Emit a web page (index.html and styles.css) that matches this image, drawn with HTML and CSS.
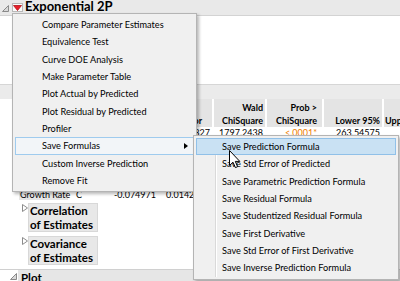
FILE: index.html
```html
<!DOCTYPE html>
<html>
<head>
<meta charset="utf-8">
<link rel="stylesheet" href="styles.css">
</head>
<body>
<div class="page">
  <div class="report">
    <div class="ohead">
      <svg class="disc" width="7" height="7" viewBox="0 0 7 7"><polygon points="6.5,0.5 6.5,6.5 0.5,6.5" fill="#d9d9d9" stroke="#8a8a8a" stroke-width="1"/></svg>
      <span class="redbtn"><svg width="9" height="6" viewBox="0 0 9 6"><polygon points="0.5,0.5 8.5,0.5 4.5,5.5" fill="#e8202a" stroke="#b01018" stroke-width="0.8"/></svg></span>
      <span class="otitle">Exponential 2P</span>
    </div>
    <div class="fitarea"></div>
    <div class="pehead"></div>
    <div class="petable">
      <div class="hc"></div>
      <div class="hc"></div>
      <div class="hc r"></div>
      <div class="hc r se">Std Error</div>
      <div class="hc r">Wald<br>ChiSquare</div>
      <div class="hc r pr">Prob &gt;<br>ChiSquare</div>
      <div class="hc r">Lower 95%</div>
      <div class="hc l">Upper 95%</div>

      <div class="dc">Scale</div>
      <div class="dc"></div>
      <div class="dc r">351.69134</div>
      <div class="dc r">8.2955827</div>
      <div class="dc r">1797.2438</div>
      <div class="dc r pr orange">&lt;.0001*</div>
      <div class="dc r">263.54575</div>
      <div class="dc r"></div>

      <div class="gap"></div>

      <div class="dc term">Growth Rate</div>
      <div class="dc flag">C</div>
      <div class="dc r">-0.074971</div>
      <div class="dc r">0.0142116</div>
      <div class="dc r"></div>
      <div class="dc r"></div>
      <div class="dc r"></div>
      <div class="dc r"></div>
    </div>
    <div class="subout first">
      <svg class="rtri" width="6" height="8" viewBox="0 0 6 8"><polygon points="0.5,0.5 5.5,4 0.5,7.5" fill="#ffffff" stroke="#8c8c8c" stroke-width="1"/></svg>
      <div class="subbox">Correlation<br>of Estimates</div>
    </div>
    <div class="subout">
      <svg class="rtri" width="6" height="8" viewBox="0 0 6 8"><polygon points="0.5,0.5 5.5,4 0.5,7.5" fill="#ffffff" stroke="#8c8c8c" stroke-width="1"/></svg>
      <div class="subbox">Covariance<br>of Estimates</div>
    </div>
    <div class="plothead">
      <svg class="disc" width="7" height="7" viewBox="0 0 7 7"><polygon points="6.5,0.5 6.5,6.5 0.5,6.5" fill="#d9d9d9" stroke="#8a8a8a" stroke-width="1"/></svg>
      <span class="plotband">Plot</span>
    </div>
  </div>

  <div class="menu main">
    <div class="mi">Compare Parameter Estimates</div>
    <div class="mi">Equivalence Test</div>
    <div class="mi">Curve DOE Analysis</div>
    <div class="mi">Make Parameter Table</div>
    <div class="mi">Plot Actual by Predicted</div>
    <div class="mi">Plot Residual by Predicted</div>
    <div class="mi">Profiler</div>
    <div class="mi open"><span>Save Formulas</span><span class="arrow"></span></div>
    <div class="mi">Custom Inverse Prediction</div>
    <div class="mi">Remove Fit</div>
  </div>

  <div class="menu sub">
    <div class="mi hot">Save Prediction Formula</div>
    <div class="mi">Save Std Error of Predicted</div>
    <div class="mi">Save Parametric Prediction Formula</div>
    <div class="mi">Save Residual Formula</div>
    <div class="mi">Save Studentized Residual Formula</div>
    <div class="mi">Save First Derivative</div>
    <div class="mi">Save Std Error of First Derivative</div>
    <div class="mi">Save Inverse Prediction Formula</div>
  </div>

  <svg class="cursor" width="12" height="19" viewBox="0 0 12 19"><path d="M0.5,0.5 L0.5,15.5 L4,12.2 L6.4,17.6 L8.6,16.7 L6.3,11.4 L10.8,11.4 Z" fill="#ffffff" stroke="#000000" stroke-width="1" stroke-linejoin="miter"/></svg>
</div>
</body>
</html>
```

FILE: styles.css
```css
html, body {
  margin: 0;
  padding: 0;
  background: #ffffff;
}
.page {
  position: relative;
  width: 400px;
  height: 281px;
  overflow: hidden;
  font-family: Lato, "Open Sans", sans-serif;
  color: #000;
  background: #ffffff;
}
.report {
  display: flex;
  flex-direction: column;
}
.ohead {
  height: 16px;
  box-sizing: border-box;
  background: #e9e9e9;
  border-bottom: 1px solid #d3d3d3;
  display: flex;
  align-items: flex-start;
  padding-left: 2px;
}
.ohead .disc {
  margin-top: 5px;
}
.redbtn {
  width: 11px;
  height: 9px;
  box-sizing: border-box;
  margin-left: 3px;
  margin-top: 3px;
  border: 1px solid #b8b8b8;
  background: #fbfbfb;
  display: flex;
  align-items: center;
  justify-content: center;
}
.otitle {
  margin-left: 2px;
  font-weight: 700;
  font-size: 13px;
  line-height: 15px;
  margin-top: -1px;
}
.fitarea {
  height: 68px;
  background: #ffffff;
}
.pehead {
  height: 15px;
  box-sizing: border-box;
  background: #ebebeb;
  border-top: 1px solid #d6d6d6;
}
.petable {
  display: grid;
  grid-template-columns: 49px 28px 58px 52px 51px 55px 58px 56px;
  column-gap: 2px;
  margin-left: 19px;
  font-size: 9px;
}
.hc {
  background: #e4e4e4;
  height: 28px;
  font-weight: 700;
  font-size: 9px;
  line-height: 12.5px;
  display: flex;
  flex-direction: column;
  justify-content: flex-end;
  padding: 0 2px 0 2px;
  box-sizing: border-box;
  white-space: nowrap;
}
.hc.r { text-align: right; }
.hc.l { text-align: left; padding-left: 1px; }
.hc.se { padding-right: 10px; }
.dc {
  height: 11px;
  line-height: 11px;
  white-space: nowrap;
  padding: 0 2px;
  overflow: hidden;
}
.dc.r { text-align: right; }
.dc.flag { padding-left: 6px; }
.pr { padding-right: 5px; }
.dc.pr { padding-right: 5px; }
.orange { color: #f07d00; }
.dc.term {
  background: #e6e6e6;
  padding-left: 1px;
  overflow: visible;
}
.gap {
  grid-column: 1 / -1;
  height: 51px;
}
.subout {
  display: flex;
  align-items: flex-start;
  margin-left: 22px;
  margin-top: 4px;
}
.subout.first {
  margin-top: 3px;
}
.rtri {
  margin-top: 1px;
}
.subbox {
  width: 70px;
  box-sizing: border-box;
  background: #e8e8e8;
  border: 1px solid #d8d8d8;
  font-weight: 700;
  font-size: 11.5px;
  line-height: 13.5px;
  padding: 0 0 0 1px;
}
.plothead {
  display: flex;
  align-items: flex-start;
  margin-top: 4px;
  padding-left: 10px;
  border-top: 1px solid #d0d0d0;
  padding-top: 0;
}
.plothead .disc {
  margin-top: 3px;
}
.plotband {
  flex: 1;
  margin-left: 1px;
  background: #e6e6e6;
  font-weight: 700;
  font-size: 11.5px;
  line-height: 16px;
  padding-left: 3px;
  height: 16px;
}

/* menus */
.menu {
  position: absolute;
  box-sizing: border-box;
  background: #f0f0f0;
  border: 1px solid #b4b4b4;
  padding: 2px;
  box-shadow: 2px 2px 3px rgba(0, 0, 0, 0.28);
  font-size: 9.2px;
}
.menu.main {
  left: 12px;
  top: 13px;
  width: 185px;
}
.menu.sub {
  left: 193px;
  top: 135px;
  width: 206px;
}
.menu.sub::before {
  content: "";
  position: absolute;
  left: 21px;
  top: 2px;
  bottom: 2px;
  width: 1px;
  background: #d9d9d9;
  border-right: 1px solid #ffffff;
}
.mi {
  position: relative;
  height: 17.33px;
  box-sizing: border-box;
  border: 1px solid transparent;
  display: flex;
  align-items: center;
  justify-content: space-between;
  white-space: nowrap;
  color: #000;
}
.main .mi {
  padding-left: 26px;
  padding-right: 5px;
}
.sub .mi {
  padding-left: 25px;
}
.mi.open {
  border-color: #9fcbee;
  background: #f2f5f8;
}
.mi.hot {
  border-color: #90c0e8;
  background: #c9e1f3;
}
.arrow {
  width: 0;
  height: 0;
  border-left: 4px solid #000;
  border-top: 3px solid transparent;
  border-bottom: 3px solid transparent;
}
.cursor {
  position: absolute;
  left: 229px;
  top: 150px;
}
```
